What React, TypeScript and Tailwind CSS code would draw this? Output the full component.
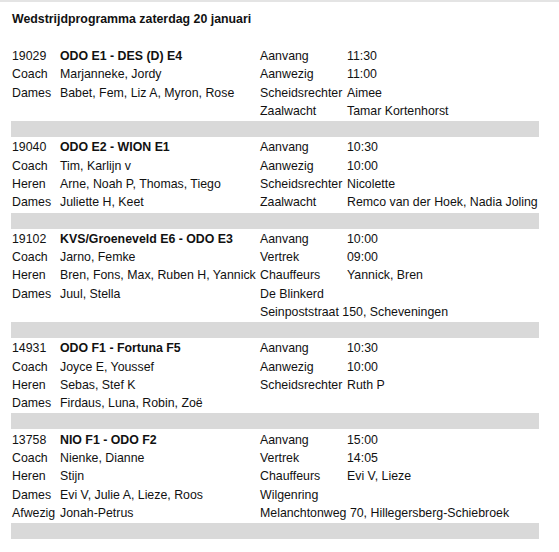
import React from "react";

const blocks: { rows: { a: string; b: string; c?: string; d?: string; bold?: boolean; span?: boolean }[] }[] = [
  {
    rows: [
      { a: "19029", b: "ODO E1 - DES (D) E4", bold: true, c: "Aanvang", d: "11:30" },
      { a: "Coach", b: "Marjanneke, Jordy", c: "Aanwezig", d: "11:00" },
      { a: "Dames", b: "Babet, Fem, Liz A, Myron, Rose", c: "Scheidsrechter", d: "Aimee" },
      { a: "", b: "", c: "Zaalwacht", d: "Tamar Kortenhorst" },
    ],
  },
  {
    rows: [
      { a: "19040", b: "ODO E2 - WION E1", bold: true, c: "Aanvang", d: "10:30" },
      { a: "Coach", b: "Tim, Karlijn v", c: "Aanwezig", d: "10:00" },
      { a: "Heren", b: "Arne, Noah P, Thomas, Tiego", c: "Scheidsrechter", d: "Nicolette" },
      { a: "Dames", b: "Juliette H, Keet", c: "Zaalwacht", d: "Remco van der Hoek, Nadia Joling" },
    ],
  },
  {
    rows: [
      { a: "19102", b: "KVS/Groeneveld E6 - ODO E3", bold: true, c: "Aanvang", d: "10:00" },
      { a: "Coach", b: "Jarno, Femke", c: "Vertrek", d: "09:00" },
      { a: "Heren", b: "Bren, Fons, Max, Ruben H, Yannick", c: "Chauffeurs", d: "Yannick, Bren" },
      { a: "Dames", b: "Juul, Stella", c: "De Blinkerd", span: true },
      { a: "", b: "", c: "Seinpoststraat 150, Scheveningen", span: true },
    ],
  },
  {
    rows: [
      { a: "14931", b: "ODO F1 - Fortuna F5", bold: true, c: "Aanvang", d: "10:30" },
      { a: "Coach", b: "Joyce E, Youssef", c: "Aanwezig", d: "10:00" },
      { a: "Heren", b: "Sebas, Stef K", c: "Scheidsrechter", d: "Ruth P" },
      { a: "Dames", b: "Firdaus, Luna, Robin, Zoë" },
    ],
  },
  {
    rows: [
      { a: "13758", b: "NIO F1 - ODO F2", bold: true, c: "Aanvang", d: "15:00" },
      { a: "Coach", b: "Nienke, Dianne", c: "Vertrek", d: "14:05" },
      { a: "Heren", b: "Stijn", c: "Chauffeurs", d: "Evi V, Lieze" },
      { a: "Dames", b: "Evi V, Julie A, Lieze, Roos", c: "Wilgenring", span: true },
      { a: "Afwezig", b: "Jonah-Petrus", c: "Melanchtonweg 70, Hillegersberg-Schiebroek", span: true },
    ],
  },
];

export default function App() {
  return (
    <div
      className="w-[559px] h-[552px] bg-white border-t-2 border-[#e4e4e4] text-[12.35px] text-[#111] overflow-hidden"
      style={{ fontFamily: '"Liberation Sans", Arial, sans-serif' }}
    >
      <div className="h-[26px] pt-[8px] pl-[12px] font-bold leading-[18px]">
        Wedstrijdprogramma zaterdag 20 januari
      </div>
      <div className="mt-[19px] w-[528px] ml-[11px]">
        {blocks.map((blk, i) => (
          <div key={i}>
            {blk.rows.map((r, j) => (
              <div
                key={j}
                className="grid grid-cols-[49px_200px_87px_1fr] h-[18.28px] items-center leading-[16px] whitespace-nowrap"
              >
                <div className="pl-px">{r.a}</div>
                <div className={r.bold ? "font-bold" : ""}>{r.b}</div>
                {r.span ? (
                  <div className="col-span-2">{r.c}</div>
                ) : (
                  <>
                    <div>{r.c ?? ""}</div>
                    <div>{r.d ?? ""}</div>
                  </>
                )}
              </div>
            ))}
            <div className="h-[18.28px] flex items-center">
              <div className="h-[16px] w-full bg-[#d9d9d9]" />
            </div>
          </div>
        ))}
      </div>
    </div>
  );
}
